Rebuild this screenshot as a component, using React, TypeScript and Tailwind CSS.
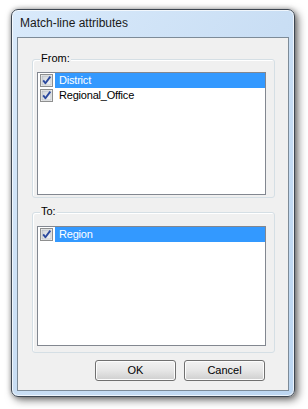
import React from 'react';

const font = { fontFamily: '"Liberation Sans", Arial, sans-serif' };

function CheckBox() {
  return (
    <svg width="13" height="13" viewBox="0 0 13 13" className="shrink-0">
      <defs>
        <linearGradient id="cbg" x1="0" y1="0" x2="1" y2="1">
          <stop offset="0" stopColor="#cfd3d8" />
          <stop offset="1" stopColor="#f7f7f7" />
        </linearGradient>
      </defs>
      <rect x="0.5" y="0.5" width="12" height="12" fill="#f4f4f4" stroke="#8e8f8f" />
      <rect x="2" y="2" width="9" height="9" fill="url(#cbg)" stroke="#a9aeb4" strokeWidth="0.6" />
      <path d="M3.2 6.4 L5.4 9.3 L10.3 2.6" fill="none" stroke="#2c4a9e" strokeWidth="1.9" strokeLinejoin="round" />
    </svg>
  );
}

function Row({ label, selected }: { label: string; selected?: boolean }) {
  return (
    <div className="flex h-[15px] items-center pl-[2px]">
      <CheckBox />
      <div
        className={
          'ml-[2px] flex h-[15px] flex-1 items-center pl-[4px] text-[11px] leading-[15px] tracking-[-0.2px] ' +
          (selected ? 'bg-[#3399ff] text-white' : 'text-black')
        }
      >
        {label}
      </div>
    </div>
  );
}

function GroupBox({
  title,
  children,
  className,
}: {
  title: string;
  children: React.ReactNode;
  className: string;
}) {
  return (
    <div
      className={
        'relative rounded-[3px] border border-[#d5dfe5] shadow-[inset_1px_1px_0_#ffffff] pl-[4px] pr-[8px] ' + className
      }
    >
      <div className="absolute left-[7px] top-[-9px] bg-[#f0f0f0] px-px text-[11px] leading-[15px] text-black">
        {title}
      </div>
      {children}
    </div>
  );
}

function Button({ label }: { label: string }) {
  return (
    <div className="flex h-[21px] w-[81px] items-center justify-center rounded-[3px] border border-[#707070] bg-gradient-to-b from-[#f2f2f2] via-[#e6e6e6] to-[#cfcfcf] text-[11px] leading-[15px] text-black shadow-[inset_0_0_0_1px_#fcfcfc]">
      {label}
    </div>
  );
}

export default function App() {
  return (
    <div className="h-[409px] w-[308px] bg-white pl-[11px] pt-[9px]" style={font}>
      <div className="flex h-[388px] w-[284px] flex-col rounded-[7px] border border-[#3e4752] bg-gradient-to-br from-[#d9eafb] via-[#c9def4] to-[#bcd6f1] px-[5px] pb-[5px] shadow-[inset_0_0_0_1px_rgba(255,255,255,0.7),3px_3px_9px_rgba(0,0,0,0.55),0_0_5px_rgba(0,0,0,0.3)]">
        <div className="h-[27px] pl-[3px] pt-[6px] text-[12px] leading-[15px] text-[#1a1a1a]">
          Match-line attributes
        </div>
        <div className="flex h-[354px] w-[272px] flex-col border border-[#7d8b98] bg-[#f0f0f0] pl-[14px] pr-[13px] pt-[21px]">
          <GroupBox title="From:" className="h-[139px] pt-[12px] pb-[2px]">
            <div className="h-[123px] border border-[#828790] bg-white">
              <Row label="District" selected />
              <Row label="Regional_Office" />
            </div>
          </GroupBox>
          <GroupBox title="To:" className="mt-[14px] h-[141px] pt-[13px] pb-[6px]">
            <div className="h-[120px] border border-[#828790] bg-white">
              <Row label="Region" selected />
            </div>
          </GroupBox>
          <div className="mt-[7px] flex justify-end gap-[8px] pr-[10px]">
            <Button label="OK" />
            <Button label="Cancel" />
          </div>
        </div>
      </div>
    </div>
  );
}
